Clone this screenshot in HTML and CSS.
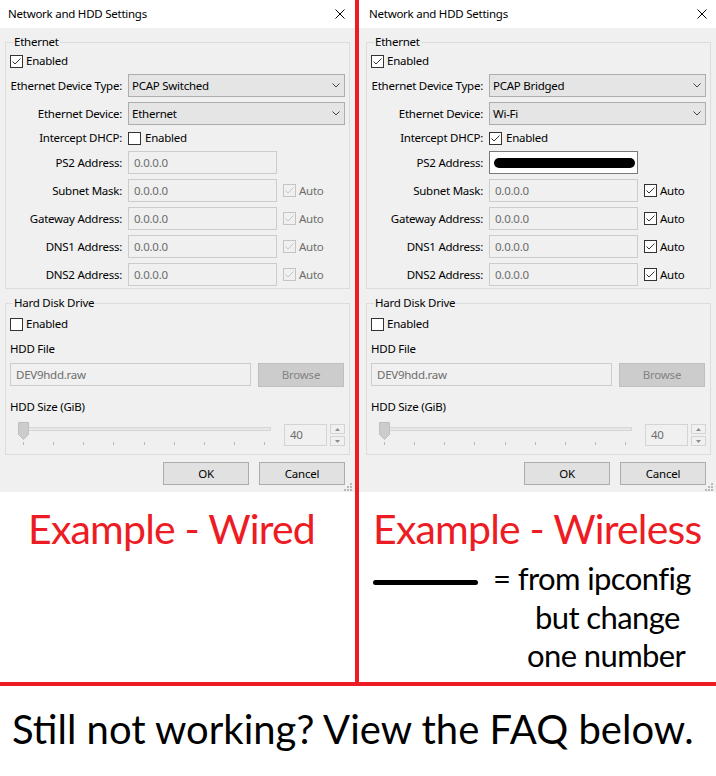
FILE: index.html
```html
<!DOCTYPE html>
<html lang="en">
<head>
<meta charset="utf-8">
<title>Network and HDD Settings examples</title>
<link rel="stylesheet" href="styles.css">
</head>
<body>
<div class="sheet">
  <div class="panels">
    <section class="panel">
      <div class="dialog">
        <div class="titlebar">
          <span class="title">Network and HDD Settings</span>
          <svg class="close" width="10" height="10" viewBox="0 0 10 10"><path d="M0.5 0.5 L9.5 9.5 M9.5 0.5 L0.5 9.5" stroke="#000" stroke-width="1" fill="none"/></svg>
        </div>
        <div class="dlg-body">
          <div class="group eth">
            <span class="legend">Ethernet</span>
            <div class="form">
              <div class="cbrow full"><span class="cb"><svg viewBox="0 0 11 11"><polyline points="1.5,5.5 4,8 9.5,2.5"/></svg></span><span>Enabled</span></div>
              <span class="lbl">Ethernet Device Type:</span>
              <div class="combo"><span>PCAP Switched</span><svg class="chev" width="8" height="5" viewBox="0 0 8 5"><polyline points="0.5,0.5 4,4 7.5,0.5"/></svg></div>
              <span class="lbl">Ethernet Device:</span>
              <div class="combo"><span>Ethernet</span><svg class="chev" width="8" height="5" viewBox="0 0 8 5"><polyline points="0.5,0.5 4,4 7.5,0.5"/></svg></div>
              <span class="lbl">Intercept DHCP:</span>
              <div class="cbrow wide"><span class="cb"></span><span>Enabled</span></div>
              <span class="lbl">PS2 Address:</span>
              <div class="tb">0.0.0.0</div>
              <span></span>
              <span class="lbl">Subnet Mask:</span>
              <div class="tb">0.0.0.0</div>
              <div class="auto dis"><span class="cb"><svg viewBox="0 0 11 11"><polyline points="1.5,5.5 4,8 9.5,2.5"/></svg></span><span>Auto</span></div>
              <span class="lbl">Gateway Address:</span>
              <div class="tb">0.0.0.0</div>
              <div class="auto dis"><span class="cb"><svg viewBox="0 0 11 11"><polyline points="1.5,5.5 4,8 9.5,2.5"/></svg></span><span>Auto</span></div>
              <span class="lbl">DNS1 Address:</span>
              <div class="tb">0.0.0.0</div>
              <div class="auto dis"><span class="cb"><svg viewBox="0 0 11 11"><polyline points="1.5,5.5 4,8 9.5,2.5"/></svg></span><span>Auto</span></div>
              <span class="lbl">DNS2 Address:</span>
              <div class="tb">0.0.0.0</div>
              <div class="auto dis"><span class="cb"><svg viewBox="0 0 11 11"><polyline points="1.5,5.5 4,8 9.5,2.5"/></svg></span><span>Auto</span></div>
            </div>
          </div>
          <div class="group hdd">
            <span class="legend">Hard Disk Drive</span>
            <div class="cbrow"><span class="cb"></span><span>Enabled</span></div>
            <div class="hdd-label">HDD File</div>
            <div class="filerow"><div class="tb file">DEV9hdd.raw</div><div class="browse">Browse</div></div>
            <div class="size-label">HDD Size (GiB)</div>
            <div class="sliderrow">
              <svg class="slider" width="256" height="26" viewBox="0 0 256 26">
                <rect x="6.5" y="6.5" width="247" height="3" fill="#e7e7e7" stroke="#d6d6d6"/>
                <g stroke="#b9b9b9"><path d="M6.5 21v3M36.5 21v3M66.5 21v3M96.5 21v3M127.5 21v3M157.5 21v3M187.5 21v3M217.5 21v3M247.5 21v3"/></g>
                <polygon points="1.5,1.5 11.5,1.5 11.5,13.5 6.5,18.5 1.5,13.5" fill="#cccccc" stroke="#bfbfbf"/>
              </svg>
              <div class="spin">40</div>
              <div class="spinbtns">
                <div class="sbtn"><svg width="5" height="3" viewBox="0 0 5 3"><polygon points="2.5,0 5,3 0,3"/></svg></div>
                <div class="sbtn"><svg width="5" height="3" viewBox="0 0 5 3"><polygon points="0,0 5,0 2.5,3"/></svg></div>
              </div>
            </div>
          </div>
          <div class="btnrow"><div class="btn">OK</div><div class="btn">Cancel</div></div>
          <svg class="grip" width="8" height="8" viewBox="0 0 8 8" fill="#b8b8b8"><rect x="6" y="0" width="2" height="2"/><rect x="3" y="3" width="2" height="2"/><rect x="6" y="3" width="2" height="2"/><rect x="0" y="6" width="2" height="2"/><rect x="3" y="6" width="2" height="2"/><rect x="6" y="6" width="2" height="2"/></svg>
        </div>
      </div>
      <div class="caption left">Example - Wired</div>
    </section>
    <div class="divider"></div>
    <section class="panel">
      <div class="dialog shift">
        <div class="titlebar">
          <span class="title">Network and HDD Settings</span>
          <svg class="close" width="10" height="10" viewBox="0 0 10 10"><path d="M0.5 0.5 L9.5 9.5 M9.5 0.5 L0.5 9.5" stroke="#000" stroke-width="1" fill="none"/></svg>
        </div>
        <div class="dlg-body">
          <div class="group eth">
            <span class="legend">Ethernet</span>
            <div class="form">
              <div class="cbrow full"><span class="cb"><svg viewBox="0 0 11 11"><polyline points="1.5,5.5 4,8 9.5,2.5"/></svg></span><span>Enabled</span></div>
              <span class="lbl">Ethernet Device Type:</span>
              <div class="combo"><span>PCAP Bridged</span><svg class="chev" width="8" height="5" viewBox="0 0 8 5"><polyline points="0.5,0.5 4,4 7.5,0.5"/></svg></div>
              <span class="lbl">Ethernet Device:</span>
              <div class="combo"><span>Wi-Fi</span><svg class="chev" width="8" height="5" viewBox="0 0 8 5"><polyline points="0.5,0.5 4,4 7.5,0.5"/></svg></div>
              <span class="lbl">Intercept DHCP:</span>
              <div class="cbrow wide"><span class="cb"><svg viewBox="0 0 11 11"><polyline points="1.5,5.5 4,8 9.5,2.5"/></svg></span><span>Enabled</span></div>
              <span class="lbl">PS2 Address:</span>
              <div class="tb live"><span class="redact"></span></div>
              <span></span>
              <span class="lbl">Subnet Mask:</span>
              <div class="tb">0.0.0.0</div>
              <div class="auto"><span class="cb"><svg viewBox="0 0 11 11"><polyline points="1.5,5.5 4,8 9.5,2.5"/></svg></span><span>Auto</span></div>
              <span class="lbl">Gateway Address:</span>
              <div class="tb">0.0.0.0</div>
              <div class="auto"><span class="cb"><svg viewBox="0 0 11 11"><polyline points="1.5,5.5 4,8 9.5,2.5"/></svg></span><span>Auto</span></div>
              <span class="lbl">DNS1 Address:</span>
              <div class="tb">0.0.0.0</div>
              <div class="auto"><span class="cb"><svg viewBox="0 0 11 11"><polyline points="1.5,5.5 4,8 9.5,2.5"/></svg></span><span>Auto</span></div>
              <span class="lbl">DNS2 Address:</span>
              <div class="tb">0.0.0.0</div>
              <div class="auto"><span class="cb"><svg viewBox="0 0 11 11"><polyline points="1.5,5.5 4,8 9.5,2.5"/></svg></span><span>Auto</span></div>
            </div>
          </div>
          <div class="group hdd">
            <span class="legend">Hard Disk Drive</span>
            <div class="cbrow"><span class="cb"></span><span>Enabled</span></div>
            <div class="hdd-label">HDD File</div>
            <div class="filerow"><div class="tb file">DEV9hdd.raw</div><div class="browse">Browse</div></div>
            <div class="size-label">HDD Size (GiB)</div>
            <div class="sliderrow">
              <svg class="slider" width="256" height="26" viewBox="0 0 256 26">
                <rect x="6.5" y="6.5" width="247" height="3" fill="#e7e7e7" stroke="#d6d6d6"/>
                <g stroke="#b9b9b9"><path d="M6.5 21v3M36.5 21v3M66.5 21v3M96.5 21v3M127.5 21v3M157.5 21v3M187.5 21v3M217.5 21v3M247.5 21v3"/></g>
                <polygon points="1.5,1.5 11.5,1.5 11.5,13.5 6.5,18.5 1.5,13.5" fill="#cccccc" stroke="#bfbfbf"/>
              </svg>
              <div class="spin">40</div>
              <div class="spinbtns">
                <div class="sbtn"><svg width="5" height="3" viewBox="0 0 5 3"><polygon points="2.5,0 5,3 0,3"/></svg></div>
                <div class="sbtn"><svg width="5" height="3" viewBox="0 0 5 3"><polygon points="0,0 5,0 2.5,3"/></svg></div>
              </div>
            </div>
          </div>
          <div class="btnrow"><div class="btn">OK</div><div class="btn">Cancel</div></div>
          <svg class="grip" width="8" height="8" viewBox="0 0 8 8" fill="#b8b8b8"><rect x="6" y="0" width="2" height="2"/><rect x="3" y="3" width="2" height="2"/><rect x="6" y="3" width="2" height="2"/><rect x="0" y="6" width="2" height="2"/><rect x="3" y="6" width="2" height="2"/><rect x="6" y="6" width="2" height="2"/></svg>
        </div>
      </div>
      <div class="caption right">Example - Wireless</div>
      <div class="note">
        <span class="note-bar"></span>
        <div class="note-lines">
          <div class="nl1">= from ipconfig</div>
          <div class="nl2">but change</div>
          <div class="nl3">one number</div>
        </div>
      </div>
    </section>
  </div>
  <div class="hrule"></div>
  <p class="footer">Still not working? View the FAQ below.</p>
</div>
</body>
</html>
```

FILE: styles.css
```css
* { box-sizing: border-box; }

body {
  margin: 0;
  width: 716px;
  height: 776px;
  overflow: hidden;
  background: #fff;
  font-family: "Noto Sans", "Open Sans", sans-serif;
}

.panels {
  display: grid;
  grid-template-columns: 355px 4px 357px;
  height: 682px;
}

.divider { background: #ed1c24; }

.hrule {
  height: 4px;
  background: #ed1c24;
}

/* ---------- dialog ---------- */
.dialog {
  font-size: 11.5px;
  letter-spacing: -0.25px;
  line-height: 16px;
  color: #000;
}

.titlebar {
  height: 28px;
  background: #fff;
  display: flex;
  align-items: center;
  justify-content: space-between;
  padding: 0 10px 0 8px;
}

.dialog.shift .titlebar { padding-left: 10px; padding-right: 9px; }

.close { display: block; }

.dlg-body {
  position: relative;
  height: 464px;
  background: #f0f0f0;
  padding: 14px 5px 0 5px;
}

.dialog.shift .dlg-body { padding-left: 7px; }

.group {
  position: relative;
  border: 1px solid #dcdcdc;
}

.legend {
  position: absolute;
  top: -9px;
  left: 7px;
  padding: 0 1px;
  background: #f0f0f0;
  line-height: 16px;
}

.eth { padding: 10px 4px 2px 4px; }

.form {
  display: grid;
  grid-template-columns: 112px 149px 62px;
  grid-template-rows: 16px 23px 23px 16px repeat(5, 23px);
  column-gap: 6px;
  row-gap: 5px;
  align-items: center;
}

.lbl {
  text-align: right;
  white-space: nowrap;
}

.cbrow {
  display: flex;
  align-items: center;
  gap: 3px;
  height: 16px;
}

.cbrow.full { grid-column: 1 / -1; }
.cbrow.wide { grid-column: 2 / -1; gap: 4px; }

.cb {
  width: 13px;
  height: 13px;
  flex: none;
  border: 1px solid #333;
  background: #fff;
  display: flex;
}

.cb svg {
  width: 11px;
  height: 11px;
  fill: none;
  stroke: #333;
  stroke-width: 1;
}

.auto {
  display: flex;
  align-items: center;
  gap: 3px;
}

.auto.dis { color: #6d6d6d; }
.auto.dis .cb { border-color: #c4c4c4; background: #f0f0f0; }
.auto.dis .cb svg { stroke: #c4c4c4; }

.combo {
  grid-column: 2 / -1;
  height: 23px;
  border: 1px solid #adadad;
  background: #e5e5e5;
  display: flex;
  align-items: center;
  justify-content: space-between;
  padding: 0 4px 0 3px;
}

.chev {
  fill: none;
  stroke: #444;
  stroke-width: 1;
}

.tb {
  height: 23px;
  border: 1px solid #cccccc;
  background: #f0f0f0;
  color: #6d6d6d;
  display: flex;
  align-items: center;
  padding-left: 5px;
}

.tb.live {
  background: #fff;
  border-color: #7a7a7a;
  padding-left: 4px;
}

.redact {
  width: 141px;
  height: 10px;
  border-radius: 5px;
  background: #000;
}

/* ---------- HDD ---------- */
.hdd {
  margin-top: 14px;
  padding: 12px 4px 7px 4px;
  display: flex;
  flex-direction: column;
}

.hdd .cbrow { height: 16px; }

.hdd-label { margin-top: 9px; }

.filerow {
  margin-top: 6px;
  display: flex;
  align-items: flex-start;
  gap: 7px;
  height: 24px;
}

.tb.file { width: 241px; padding-left: 5px; }

.browse {
  width: 86px;
  height: 24px;
  background: #cccccc;
  border: 1px solid #bfbfbf;
  color: #838383;
  display: flex;
  align-items: center;
  justify-content: center;
}

.size-label { margin-top: 12px; }

.sliderrow {
  margin-top: 6px;
  height: 26px;
  display: flex;
  align-items: flex-start;
}

.slider {
  display: block;
  margin-left: 7px;
  flex: none;
}

.spin {
  margin-left: 11px;
  margin-top: 3px;
  width: 43px;
  height: 22px;
  border: 1px solid #d4d4d4;
  background: #f0f0f0;
  color: #6d6d6d;
  display: flex;
  align-items: center;
  padding-left: 5px;
}

.spinbtns {
  margin-left: 3px;
  margin-top: 3px;
  width: 15px;
  display: flex;
  flex-direction: column;
  gap: 2px;
}

.sbtn {
  height: 10px;
  border: 1px solid #d4d4d4;
  background: #f0f0f0;
  display: flex;
  align-items: center;
  justify-content: center;
}

.sbtn svg { fill: #8a8a8a; display: block; }

.btnrow {
  display: flex;
  justify-content: flex-end;
  gap: 10px;
  margin-top: 7px;
  padding-right: 5px;
}

.btn {
  width: 86px;
  height: 23px;
  border: 1px solid #adadad;
  background: #e1e1e1;
  display: flex;
  align-items: center;
  justify-content: center;
}

.grip {
  position: absolute;
  right: 3px;
  bottom: 1px;
}

/* ---------- annotations ---------- */
.caption {
  font-family: Lato, "Open Sans", sans-serif;
  font-size: 41px;
  line-height: 41px;
  letter-spacing: -0.8px;
  color: #ed1c24;
  margin-top: 16px;
  white-space: nowrap;
}

.caption.left { padding-left: 28px; }
.caption.right { padding-left: 14px; }

.note {
  display: flex;
  align-items: flex-start;
  padding-left: 14px;
  margin-top: 10px;
  font-family: Lato, "Open Sans", sans-serif;
  font-size: 31px;
  line-height: 38.5px;
  letter-spacing: -0.6px;
  color: #000;
}

.note-bar {
  width: 105px;
  height: 5px;
  border-radius: 3px;
  background: #000;
  margin-top: 21px;
  flex: none;
}

.note-lines {
  margin-left: 15px;
  white-space: nowrap;
}

.nl2 { margin-left: 42px; }
.nl3 { margin-left: 34px; }

.footer {
  margin: 23px 0 0 0;
  padding-left: 12px;
  font-family: Lato, "Open Sans", sans-serif;
  font-size: 40px;
  line-height: 40px;
  color: #000;
  white-space: nowrap;
}
```
